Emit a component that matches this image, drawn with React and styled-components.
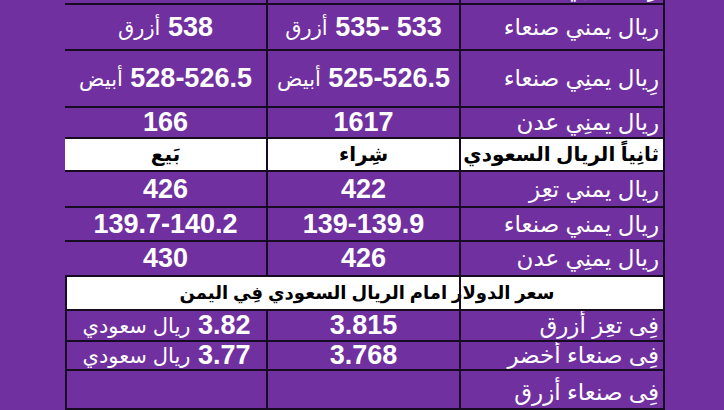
import React from "react";
import styled, { createGlobalStyle } from "styled-components";

const GlobalStyle = createGlobalStyle`
  html, body {
    margin: 0;
    padding: 0;
    background: #7030a0;
    overflow: hidden;
  }
  #root {
    height: 410px;
    overflow: hidden;
  }
`;

const LINE = "#160b20";
const COLS = "204px 193px 203px";

const Page = styled.div`
  width: 724px;
  height: 410px;
  overflow: hidden;
  background: #7030a0;
  display: flex;
  justify-content: flex-start;
  font-family: "Liberation Sans", Arial, "DejaVu Sans", sans-serif;
`;

const Table = styled.div`
  direction: rtl;
  margin-top: -27px;
  margin-left: 65px;
  width: 600px;
  display: flex;
  flex-direction: column;
`;

const Row = styled.div`
  display: grid;
  grid-template-columns: ${COLS};
  height: ${(p) => p.$h}px;
  background: ${(p) => (p.$light ? "#ffffff" : "transparent")};
`;

const Cell = styled.div`
  box-sizing: border-box;
  display: flex;
  align-items: ${(p) => (p.$top ? "flex-start" : "center")};
  justify-content: ${(p) => (p.$label ? "flex-start" : "center")};
  padding-right: ${(p) => (p.$label ? "4px" : "0")};
  padding-top: ${(p) => (p.$top ? "10px" : "0")};
  border-right: 2px solid ${LINE};
  border-bottom: 2px solid ${LINE};
  border-left: ${(p) => (p.$closed ? `2px solid ${LINE}` : "none")};
  color: ${(p) => (p.$light ? "#000" : "#fff")};
  font-size: ${(p) => (p.$light ? "20px" : p.$label ? "23px" : "27px")};
  font-weight: ${(p) => (p.$bold ? 700 : 400)};
  line-height: 1;
  white-space: nowrap;
  overflow: hidden;
`;

const Num = styled.span`
  font-size: 27px;
  font-weight: 700;
`;

const Word = styled.span`
  font-size: 21px;
  font-weight: 400;
`;

const Title = styled.div`
  position: relative;
  box-sizing: border-box;
  height: 34px;
  display: flex;
  align-items: center;
  justify-content: center;
  padding-left: 4px;
  background: #fff;
  color: #000;
  border-right: 2px solid ${LINE};
  border-left: 2px solid ${LINE};
  border-bottom: 2px solid ${LINE};
  font-size: 18px;
  font-weight: 700;
  line-height: 1;
  white-space: nowrap;
  &::after {
    content: "";
    position: absolute;
    top: 0;
    bottom: 0;
    right: 202px;
    width: 2px;
    background: ${LINE};
  }
`;

const Value = ({ v }) => {
  if (Array.isArray(v)) {
    return (
      <>
        <Num>{v[0]}</Num>&nbsp;<Word>{v[1]}</Word>
      </>
    );
  }
  return <Num>{v}</Num>;
};

const DataRow = ({ h, label, buy, sell, closed, top }) => (
  <Row $h={h}>
    <Cell $label $top={top}>{label}</Cell>
    <Cell $top={top}>
      <Value v={buy} />
    </Cell>
    <Cell $closed={closed} $top={top}>
      <Value v={sell} />
    </Cell>
  </Row>
);

const upper = [
  { h: 33, label: "ريال يمنِي عدن", buy: "1617", sell: "1630" },
  { h: 47, label: "ريال يمني صنعاء", buy: ["533 -535", "أزرق"], sell: ["538", "أزرق"] },
  { h: 58, label: "رِيال يمنِي صنعاء", buy: ["525-526.5", "أبيض"], sell: ["528-526.5", "أبيض"] },
  { h: 32, label: "ريال يمنِي عدن", buy: "1617", sell: "166" },
];

const saudi = [
  { h: 37, label: "ريال يمني تعِز", buy: "422", sell: "426" },
  { h: 35, label: "ريال يمني صنعاء", buy: "139-139.9", sell: "139.7-140.2" },
  { h: 36, label: "ريال يمنِي عدن", buy: "426", sell: "430" },
];

const dollar = [
  { h: 32, label: "فِى تعِز أزرق", buy: "3.815", sell: ["3.82", "ريال سعودي"] },
  { h: 30, label: "فِى صنعاء أخضر", buy: "3.768", sell: ["3.77", "ريال سعودي"] },
  { h: 40, label: "فِى صنعاء أزرق", buy: "", sell: "", top: true },
];

export default function App() {
  return (
    <>
      <GlobalStyle />
      <Page>
        <Table>
          {upper.map((r, i) => (
            <DataRow key={"u" + i} {...r} />
          ))}
          <Row $h={34} $light>
            <Cell $label $light $bold>ثانِياً الريال السعودي</Cell>
            <Cell $light $bold>شِراء</Cell>
            <Cell $light $bold>بَيع</Cell>
          </Row>
          {saudi.map((r, i) => (
            <DataRow key={"s" + i} {...r} />
          ))}
          <Title>سعر الدولار امام الريال السعودي فِي اليمن</Title>
          {dollar.map((r, i) => (
            <DataRow key={"d" + i} {...r} closed />
          ))}
        </Table>
      </Page>
    </>
  );
}
